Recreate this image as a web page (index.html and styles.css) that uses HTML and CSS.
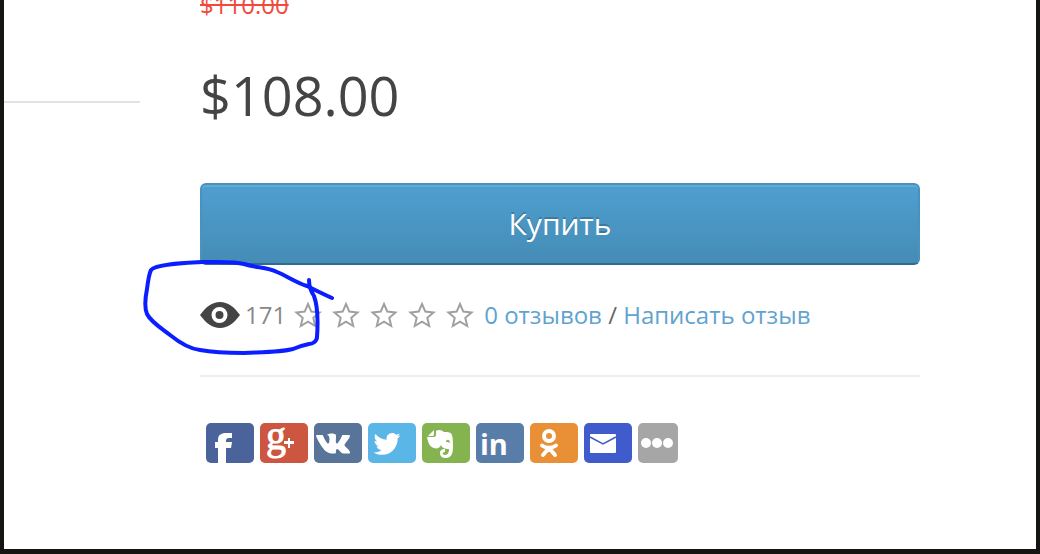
FILE: index.html
```html
<!DOCTYPE html>
<html lang="ru">
<head>
    <meta charset="UTF-8">
    <meta name="viewport" content="width=device-width, initial-scale=1.0">
    <title>$108.00</title>
    <link rel="stylesheet" href="styles.css">
</head>
<body>

    <svg class="sprite" aria-hidden="true">
        <symbol id="star" viewBox="0 0 28 28">
            <path d="M14 3l3.3 7.6 8.2.8-6.200 5.400 1.900 8.200L14 20.700 6.800 25l1.900-8.200L2.500 11.400l8.200-.8z"/>
        </symbol>
    </svg>

    <main class="page">
        <div class="side">
            <hr>
        </div>

        <div class="product">
            <p class="old-price"><s>$110.00</s></p>
            <h2 class="price">$108.00</h2>

            <button type="button" class="buy">Купить</button>

            <div class="rating">
                <svg class="eye" viewBox="0 0 40 26" aria-hidden="true">
                    <path fill="#444" d="M0 13C6 5 12 0 20 0s14 5 20 13c-6 8-12 13-20 13S6 21 0 13z"/>
                    <circle cx="19.500" cy="13" r="6" fill="#444" stroke="#fff" stroke-width="4"/>
                    <circle cx="19.500" cy="13" r="3" fill="#444"/>
                </svg>
                <span class="views">171</span>
                <span class="stars">
                    <svg><use href="#star"/></svg>
                    <svg><use href="#star"/></svg>
                    <svg><use href="#star"/></svg>
                    <svg><use href="#star"/></svg>
                    <svg><use href="#star"/></svg>
                </span>
                <span><a href="#reviews">0 отзывов</a> / <a href="#write">Написать отзыв</a></span>

                <svg class="marker" viewBox="0 0 200 105" aria-hidden="true">
                    <path d="M192 43C183 39 175 35 167 31C155 27 147 21 137 17C127 12 116 13 104 9C94 6 78 7 62 7C44 8 16 9 11 15C9 19 8 26 7 34C5 44 4 52 7 59C11 67 21 73 30 80C40 88 50 94 60 95C76 98 90 98 104 98C126 97 142 97 153 94C160 91 164 90 169 89C173 89 177 86 177 82C178 68 178 52 174 41C170 35 169 31 169 25"/>
                </svg>
            </div>

            <hr>

            <div class="share">
                <a href="#facebook" class="facebook" aria-label="Facebook">
                    <svg viewBox="0 0 48 40"><path d="M12 40V25H9v-6h3v-2c0-5 3-7 8-7h6v5h-3c-2 0-3 1-3 3v1h6l-1 6h-5v15z"/></svg>
                </a>
                <a href="#google" class="google" aria-label="Google+">
                    <svg viewBox="0 0 48 40"><text class="g" x="6" y="26">g</text><path d="M28 15h2v3h4v3h-4v4h-2v-4h-4v-3h4z"/></svg>
                </a>
                <a href="#vk" class="vk" aria-label="VK">
                    <svg viewBox="0 0 48 40"><path transform="translate(2 3.500) scale(1.420)" d="M13.162 18.994c.609 0 .858-.406.851-.915-.031-1.917.714-2.949 2.059-1.604 1.488 1.488 1.796 2.519 3.603 2.519h3.200c.808 0 1.126-.26 1.126-.668 0-.863-1.421-2.386-2.625-3.504-1.686-1.565-1.765-1.602-.313-3.486 1.801-2.339 4.157-5.336 2.073-5.336h-3.981c-.772 0-.828.435-1.103 1.083-.995 2.347-2.886 5.387-3.604 4.922-.751-.485-.407-2.406-.35-5.261.015-.754.011-1.271-1.141-1.539-.629-.145-1.241-.205-1.809-.205-2.273 0-3.841.953-2.950 1.119 1.571.293 1.420 3.692 1.054 5.160-.638 2.556-3.036-2.024-4.035-4.305-.241-.548-.315-.974-1.175-.974h-3.255c-.492 0-.787.16-.787.516 0 .602 2.960 6.720 5.786 9.770 2.756 2.975 5.480 2.708 7.376 2.708z"/></svg>
                </a>
                <a href="#twitter" class="twitter" aria-label="Twitter">
                    <svg viewBox="0 0 48 40"><path transform="translate(5.500 7.500) scale(1.120)" d="M24 4.557c-.883.392-1.832.656-2.828.775 1.017-.609 1.798-1.574 2.165-2.724-.951.564-2.005.974-3.127 1.195-.897-.957-2.178-1.555-3.594-1.555-3.179 0-5.515 2.966-4.797 6.045-4.091-.205-7.719-2.165-10.148-5.144-1.290 2.213-.669 5.108 1.523 6.574-.806-.026-1.566-.247-2.229-.616-.054 2.281 1.581 4.415 3.949 4.890-.693.188-1.452.232-2.224.084.626 1.956 2.444 3.379 4.600 3.419-2.070 1.623-4.678 2.348-7.290 2.040 2.179 1.397 4.768 2.212 7.548 2.212 9.142 0 14.307-7.721 13.995-14.646.962-.695 1.797-1.562 2.457-2.549z"/></svg>
                </a>
                <a href="#evernote" class="evernote" aria-label="Evernote">
                    <svg viewBox="0 0 48 40">
                        <path d="M14 8c2-2 6-1 8 1 4 0 7 0 8 3 1 4 1 8 1 12 0 7-2 11-7 11-4 0-6-2-6-5s2-4 5-4v3c-3 0-3 3 0 3 3 0 4-3 4-6-4 0-7-1-8-4-1 3-4 4-7 3-4-1-6-5-7-11h6c3 0 3-1 3-3z"/>
                        <path d="M12 7v5l-1 1H6z"/>
                        <path class="eye-mark" d="M24 19c0-3 4-3 4 1-1-1-3-1-4-1z"/>
                    </svg>
                </a>
                <a href="#linkedin" class="linkedin" aria-label="LinkedIn">
                    <svg viewBox="0 0 48 40"><text class="in" x="4" y="32">in</text></svg>
                </a>
                <a href="#ok" class="ok" aria-label="Одноклассники">
                    <svg viewBox="0 0 48 40"><g fill="none" stroke="#fff" stroke-width="4" stroke-linecap="round"><circle cx="19" cy="13" r="5"/><path d="M12 22.500c4 3 10 3 14 0M19 25l-6 7M19 25l6 7"/></g></svg>
                </a>
                <a href="#mail" class="mail" aria-label="Email">
                    <svg viewBox="0 0 48 40"><rect x="6" y="11" width="26" height="19" rx="1"/><path d="M6 14l13 7 13-7" fill="none" stroke="#405bcb" stroke-width="1.500"/></svg>
                </a>
                <button type="button" class="more" aria-label="Ещё">
                    <svg viewBox="0 0 40 40"><circle cx="8" cy="20" r="5"/><circle cx="19" cy="20" r="5"/><circle cx="30" cy="20" r="5"/></svg>
                </button>
            </div>
        </div>
    </main>

</body>
</html>
```
FILE: styles.css
```css
* {
    margin: 0;
    padding: 0;
    box-sizing: border-box;
}

body {
    min-height: 100vh;
    display: flex;
    background: #161512;
    padding: 0 4px 5px;
    font-family: 'Open Sans', sans-serif;
    font-size: 24px;
    line-height: 34px;
    color: #666;
}

a {
    color: #5fa3d0;
    text-decoration: none;
}

hr {
    border: 0;
    border-top: 2px solid #eee;
}

svg {
    display: block;
}

.sprite {
    position: absolute;
    width: 0;
    height: 0;
}

.page {
    flex: 1;
    display: grid;
    grid-template-columns: 136px 1fr;
    column-gap: 60px;
    padding-right: 116px;
    background: #fff;
    overflow: hidden;
}

.side {
    padding-top: 101px;
}

.side hr {
    border-color: #e3e3e3;
}

/* ====== price ====== */
.old-price {
    margin-top: -12px;
    color: #f14a3c;
}

.old-price s {
    text-decoration-thickness: 2px;
}

.price {
    margin-top: 43px;
    font-size: 54px;
    font-weight: 400;
    line-height: 60px;
    color: #444;
}

.buy {
    display: block;
    width: 100%;
    height: 82px;
    margin-top: 58px;
    padding-bottom: 2px;
    border: 2px solid #4a92be;
    border-bottom-color: #2f6c8f;
    border-radius: 6px;
    background: linear-gradient(#4e9fcf, #458cb6);
    box-shadow: inset 0 2px 0 rgba(255, 255, 255, 0.12);
    font: 30px 'Open Sans', sans-serif;
    color: #fff;
    text-shadow: 0 -2px 0 rgba(0, 0, 0, 0.2);
    cursor: pointer;
}

/* ====== views and reviews ====== */
.rating {
    position: relative;
    display: flex;
    align-items: center;
    margin: 33px 0 43px;
    white-space: nowrap;
}

.eye {
    width: 40px;
    height: 26px;
    margin-right: 5px;
}

.views {
    margin-right: 8px;
    color: #888;
}

.stars {
    display: flex;
    gap: 10px;
    margin-right: 10px;
}

.stars svg {
    width: 28px;
    height: 28px;
    fill: none;
    stroke: #a0a0a0;
    stroke-width: 2;
}

.marker {
    position: absolute;
    left: -60px;
    top: -43px;
    width: 200px;
    height: 105px;
    fill: none;
    stroke: #0a1eff;
    stroke-width: 4;
    stroke-linecap: round;
    pointer-events: none;
}

/* ====== share buttons ====== */
.share {
    display: flex;
    gap: 6px;
    margin-top: 46px;
    padding-left: 6px;
}

.share a,
.share button {
    width: 48px;
    height: 40px;
    border: 0;
    border-radius: 5px;
}

.share svg {
    width: 100%;
    height: 100%;
    fill: #fff;
    overflow: visible;
}

.share .more {
    width: 40px;
    background: #a6a6a6;
    cursor: pointer;
}

.facebook { background: #4b639b; }
.google { background: #cc5640; }
.vk { background: #587499; }
.twitter { background: #5ab6e7; }
.evernote { background: #85b34f; }
.linkedin { background: #597da9; }
.ok { background: #e98f35; }
.mail { background: #405bcb; }

.g {
    font: 40px 'Liberation Serif', serif;
    stroke: #fff;
    stroke-width: 1;
}

.in {
    font: bold 29px 'Open Sans', sans-serif;
}

.share .eye-mark {
    fill: #85b34f;
}
```
